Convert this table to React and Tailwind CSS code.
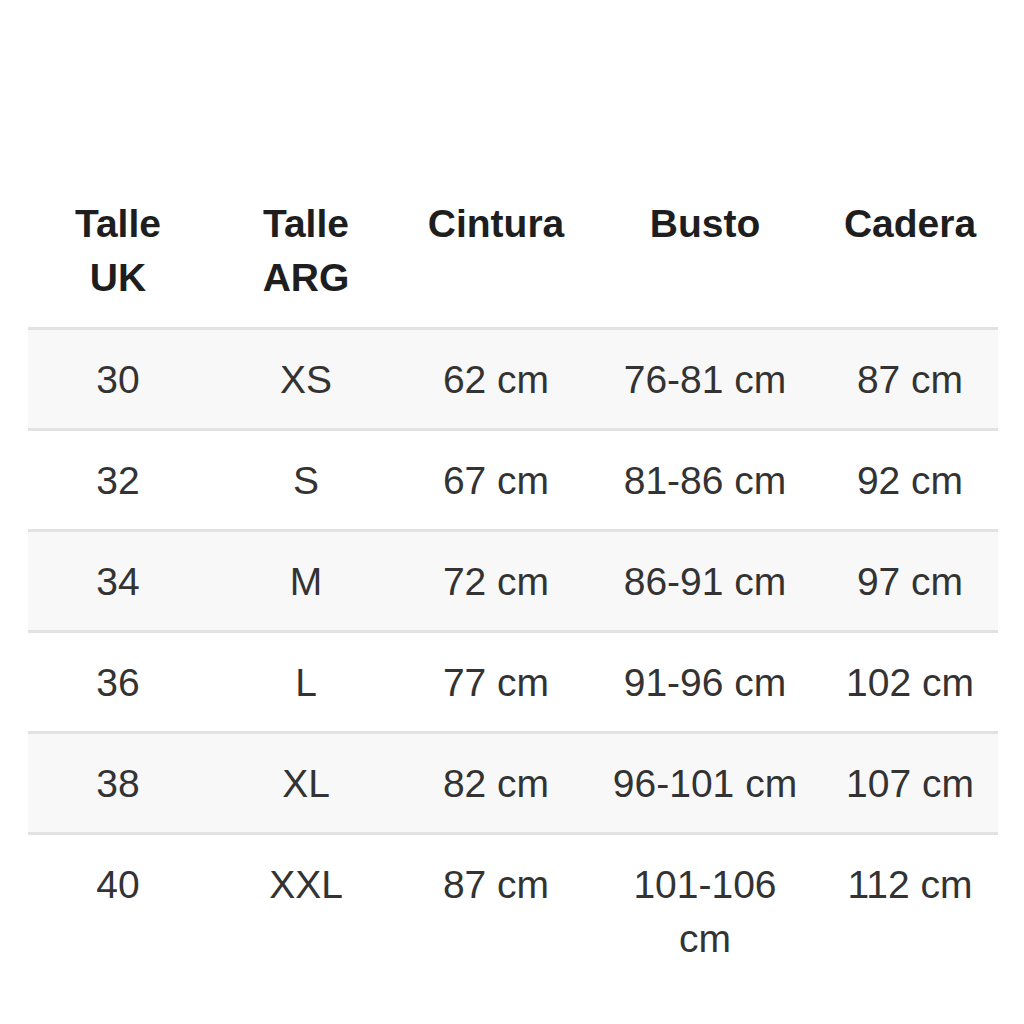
const headers = [
  ['Talle', 'UK'],
  ['Talle', 'ARG'],
  ['Cintura'],
  ['Busto'],
  ['Cadera'],
]

const rows = [
  ['30', 'XS', '62 cm', ['76-81 cm'], '87 cm'],
  ['32', 'S', '67 cm', ['81-86 cm'], '92 cm'],
  ['34', 'M', '72 cm', ['86-91 cm'], '97 cm'],
  ['36', 'L', '77 cm', ['91-96 cm'], '102 cm'],
  ['38', 'XL', '82 cm', ['96-101 cm'], '107 cm'],
  ['40', 'XXL', '87 cm', ['101-106', 'cm'], '112 cm'],
]

const widths = ['w-[180px]', 'w-[196px]', 'w-[184px]', 'w-[234px]', 'w-[176px]']

export default function App() {
  return (
    <div className="w-[1024px] h-[1024px] bg-white pt-[173px] pl-[28px] font-[Liberation_Sans,Arial,sans-serif] text-[39px] leading-[54px] text-[#333]">
      <table className="w-[970px] table-fixed border-collapse">
        <thead>
          <tr>
            {headers.map((h, i) => (
              <th key={i} className={`${widths[i]} px-2 pt-[24px] pb-[22px] text-center align-top font-bold text-[#1e1e1e] border-b-[3px] border-[#e2e2e2]`}>
                {h.map((line, j) => (
                  <div key={j}>{line}</div>
                ))}
              </th>
            ))}
          </tr>
        </thead>
        <tbody>
          {rows.map((r, i) => (
            <tr key={i} className={i % 2 === 0 ? 'bg-[#f8f8f8]' : 'bg-white'}>
              {r.map((c, j) => (
                <td key={j} className={`px-2 pt-[23px] text-center align-top ${i < rows.length - 1 ? 'pb-[21px] border-b-[3px] border-[#e2e2e2]' : 'pb-[21px]'}`}>
                  {Array.isArray(c) ? c.map((line, k) => <div key={k}>{line}</div>) : c}
                </td>
              ))}
            </tr>
          ))}
        </tbody>
      </table>
    </div>
  )
}
